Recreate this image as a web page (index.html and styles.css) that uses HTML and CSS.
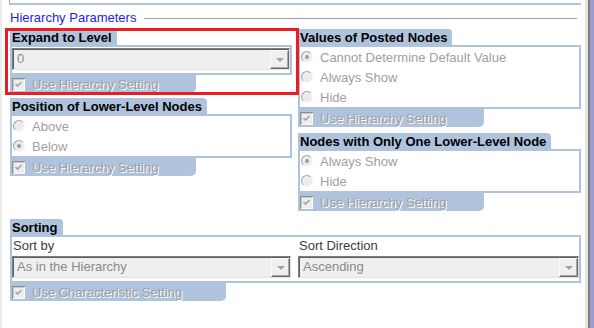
FILE: index.html
```html
<!DOCTYPE html>
<html>
<head>
<meta charset="utf-8">
<link rel="stylesheet" href="styles.css">
</head>
<body>
<div class="page">
  <div class="main">
    <div class="topbox"></div>
    <div class="title"><span class="title-text">Hierarchy Parameters</span><span class="title-line"></span></div>
    <div class="cols">
      <div class="col">
        <section class="group">
          <div class="tab">Expand to Level</div>
          <div class="body body-combo">
            <div class="combo"><span class="combo-text">0</span><span class="combo-btn"><span class="arrow"></span></span></div>
          </div>
          <div class="band band-hier">
            <svg class="check" width="13" height="13" viewBox="0 0 13 13"><rect width="13" height="13" fill="#fbfbfb"/><path d="M0 0H13V1H1V13H0Z" fill="#8d8d8d"/><path d="M1 1H12V2H2V12H1Z" fill="#c9c9c9"/><rect x="2" y="2" width="10" height="10" fill="#eeeeee"/><path d="M3.5 6l2 2 4-4" stroke="#a3a3a3" stroke-width="1.7" fill="none"/></svg>
            <span class="dis">Use Hierarchy Setting</span>
          </div>
        </section>
        <section class="group group-next">
          <div class="tab">Position of Lower-Level Nodes</div>
          <div class="body">
            <div class="row"><span class="radio"></span><span class="dis">Above</span></div>
            <div class="row"><span class="radio on"></span><span class="dis">Below</span></div>
          </div>
          <div class="band band-hier">
            <svg class="check" width="13" height="13" viewBox="0 0 13 13"><rect width="13" height="13" fill="#fbfbfb"/><path d="M0 0H13V1H1V13H0Z" fill="#8d8d8d"/><path d="M1 1H12V2H2V12H1Z" fill="#c9c9c9"/><rect x="2" y="2" width="10" height="10" fill="#eeeeee"/><path d="M3.5 6l2 2 4-4" stroke="#a3a3a3" stroke-width="1.7" fill="none"/></svg>
            <span class="dis">Use Hierarchy Setting</span>
          </div>
        </section>
      </div>
      <div class="col">
        <section class="group">
          <div class="tab">Values of Posted Nodes</div>
          <div class="body">
            <div class="row"><span class="radio on"></span><span class="dis">Cannot Determine Default Value</span></div>
            <div class="row"><span class="radio"></span><span class="dis">Always Show</span></div>
            <div class="row"><span class="radio"></span><span class="dis">Hide</span></div>
          </div>
          <div class="band band-hier">
            <svg class="check" width="13" height="13" viewBox="0 0 13 13"><rect width="13" height="13" fill="#fbfbfb"/><path d="M0 0H13V1H1V13H0Z" fill="#8d8d8d"/><path d="M1 1H12V2H2V12H1Z" fill="#c9c9c9"/><rect x="2" y="2" width="10" height="10" fill="#eeeeee"/><path d="M3.5 6l2 2 4-4" stroke="#a3a3a3" stroke-width="1.7" fill="none"/></svg>
            <span class="dis">Use Hierarchy Setting</span>
          </div>
        </section>
        <section class="group group-next2">
          <div class="tab">Nodes with Only One Lower-Level Node</div>
          <div class="body">
            <div class="row"><span class="radio on"></span><span class="dis">Always Show</span></div>
            <div class="row"><span class="radio"></span><span class="dis">Hide</span></div>
          </div>
          <div class="band band-hier">
            <svg class="check" width="13" height="13" viewBox="0 0 13 13"><rect width="13" height="13" fill="#fbfbfb"/><path d="M0 0H13V1H1V13H0Z" fill="#8d8d8d"/><path d="M1 1H12V2H2V12H1Z" fill="#c9c9c9"/><rect x="2" y="2" width="10" height="10" fill="#eeeeee"/><path d="M3.5 6l2 2 4-4" stroke="#a3a3a3" stroke-width="1.7" fill="none"/></svg>
            <span class="dis">Use Hierarchy Setting</span>
          </div>
        </section>
      </div>
    </div>
    <section class="group sorting">
      <div class="tab">Sorting</div>
      <div class="body sort-body">
        <div class="sort-col">
          <div class="label">Sort by</div>
          <div class="combo"><span class="combo-text">As in the Hierarchy</span><span class="combo-btn"><span class="arrow"></span></span></div>
        </div>
        <div class="sort-col">
          <div class="label">Sort Direction</div>
          <div class="combo"><span class="combo-text">Ascending</span><span class="combo-btn"><span class="arrow"></span></span></div>
        </div>
      </div>
      <div class="band band-char">
        <svg class="check" width="13" height="13" viewBox="0 0 13 13"><rect width="13" height="13" fill="#fbfbfb"/><path d="M0 0H13V1H1V13H0Z" fill="#8d8d8d"/><path d="M1 1H12V2H2V12H1Z" fill="#c9c9c9"/><rect x="2" y="2" width="10" height="10" fill="#eeeeee"/><path d="M3.5 6l2 2 4-4" stroke="#a3a3a3" stroke-width="1.7" fill="none"/></svg>
        <span class="dis">Use Characteristic Setting</span>
      </div>
    </section>
  </div>
  <div class="scrollbar"></div>
  <div class="highlight"></div>
</div>
</body>
</html>
```

FILE: styles.css
```css
* { box-sizing: border-box; }
html, body { margin: 0; padding: 0; background: #fff; }
body {
  font-family: "Liberation Sans", Arial, sans-serif;
  font-size: 13px;
  color: #000;
}
.page {
  position: relative;
  display: flex;
  width: 594px;
  height: 328px;
  overflow: hidden;
}
.main {
  width: 581px;
  padding-left: 10px;
  background: linear-gradient(to right, #ececec 0, #ececec 2px, transparent 2px);
}
.topbox {
  margin-left: -1px;
  width: 572px;
  height: 5px;
  border-left: 1px solid #a8a8a8;
  border-bottom: 2px solid #afc3dd;
}
.title {
  display: flex;
  align-items: center;
  margin-top: 5px;
  height: 15px;
  line-height: 15px;
}
.title-text { color: #2323e6; }
.title-line {
  flex: 1;
  height: 1px;
  margin: 1px 4px 0 8px;
  background: #a0a0a0;
}
.cols {
  display: grid;
  grid-template-columns: 282px 283px;
  column-gap: 6px;
  margin-top: 4px;
}
.group-next { margin-top: 5px; }
.group-next2 { margin-top: 6px; }
.tab {
  display: inline-block;
  vertical-align: top;
  height: 16px;
  line-height: 17px;
  padding: 0 5px 0 2px;
  background: #afc3dd;
  border-top-right-radius: 4px;
  font-weight: bold;
  white-space: nowrap;
}
.body {
  border: 2px solid #afc3dd;
}
.body-combo { padding: 1px 0 3px; }
.row {
  display: flex;
  align-items: center;
  height: 20px;
  line-height: 15px;
}
.radio {
  position: relative;
  flex: none;
  width: 12px;
  height: 12px;
  margin: 0 7px 0 1px;
  border-radius: 50%;
  border: 1px solid;
  border-color: #a3a3a3 #f6f6f6 #f6f6f6 #a3a3a3;
  background: #ececec;
}
.radio.on::after {
  content: "";
  position: absolute;
  left: 3px;
  top: 3px;
  width: 4px;
  height: 4px;
  border-radius: 50%;
  background: #9c9c9c;
}
.dis {
  color: #a0a0a0;
  text-shadow: 1px 1px 0 #fff;
  white-space: nowrap;
}
.band {
  display: flex;
  align-items: center;
  height: 18px;
  padding-left: 2px;
  background: #afc3dd;
  border-bottom-right-radius: 5px;
  line-height: 15px;
}
.band-hier { width: 186px; }
.band-char { width: 216px; }
.check { flex: none; margin-right: 7px; }
.combo {
  display: flex;
  height: 22px;
  border: 1px solid;
  border-color: #7e7e7e #e2e2e2 #e2e2e2 #7e7e7e;
  box-shadow: inset 1px 1px 0 #5e5e5e;
  background: #efefef;
}
.combo-text {
  flex: 1;
  padding: 1px 0 0 4px;
  line-height: 18px;
  color: #8a8a8a;
  white-space: nowrap;
  overflow: hidden;
}
.combo-btn {
  display: flex;
  align-items: center;
  justify-content: center;
  width: 19px;
  height: 19px;
  margin-top: 1px;
  border: 1px solid;
  border-color: #fbfbfb #6b6b6b #6b6b6b #fbfbfb;
  box-shadow: inset -1px -1px 0 #a8a8a8;
  background: #efefef;
}
.arrow {
  width: 0;
  height: 0;
  border-left: 4px solid transparent;
  border-right: 4px solid transparent;
  border-top: 4px solid #a3a3a3;
  margin-top: 1px;
}
.sorting { margin-top: 8px; width: 571px; }
.sort-body {
  display: grid;
  grid-template-columns: 279px 1fr;
  column-gap: 7px;
  padding: 1px 0 3px;
}
.label {
  height: 15px;
  line-height: 15px;
  padding-left: 1px;
  margin-bottom: 3px;
  color: #3c3c3c;
}
.scrollbar {
  margin-left: 4px;
  width: 9px;
  height: 328px;
  background: linear-gradient(to right, #e4e4e4 0, #e4e4e4 3px, #7d7d7d 3px, #7d7d7d 5px, #9d9dcf 5px);
}
.highlight {
  position: absolute;
  left: 5px;
  top: 28px;
  width: 294px;
  height: 67px;
  border: 3px solid #ec1c24;
}
```
